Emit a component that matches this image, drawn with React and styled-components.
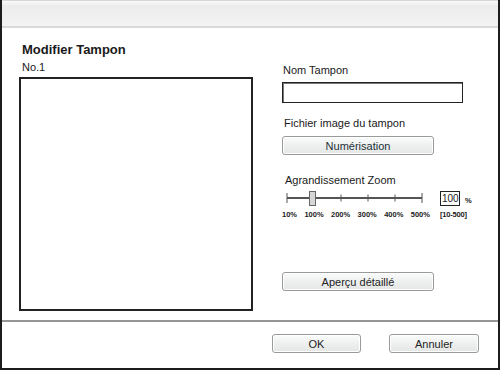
import React from "react";
import styled, { createGlobalStyle } from "styled-components";

const GlobalStyle = createGlobalStyle`
	body {
		margin: 0;
		background: #fff;
		font-family: "Liberation Sans", Arial, sans-serif;
	}
`;

const Frame = styled.div`
	width: 500px;
	height: 370px;
	box-sizing: border-box;
	border: 2px solid #1c1c1c;
	border-top: none;
	display: flex;
	flex-direction: column;
	background: #fff;
	color: #1a1a1a;
`;

const TitleBar = styled.div`
	flex: 0 0 auto;
	height: 28px;
	box-sizing: border-box;
	border-top: 1px solid #d6d6d6;
	border-bottom: 2px solid #dadada;
	background: linear-gradient(to bottom, #fafafa 0%, #ececec 20%, #f3f3f3 100%);
`;

const Body = styled.div`
	flex: 1;
	display: flex;
	padding: 14px 0 0 17px;
`;

const LeftCol = styled.div`
	display: flex;
	flex-direction: column;
	width: 234px;
`;

const Title = styled.div`
	font-size: 13px;
	font-weight: bold;
	line-height: 16px;
	padding-left: 3px;
`;

const Sub = styled.div`
	font-size: 11px;
	line-height: 14px;
	margin-top: 2px;
	padding-left: 3px;
`;

const Preview = styled.div`
	margin-top: 3px;
	width: 234px;
	height: 234px;
	box-sizing: border-box;
	border: 2px solid #222;
	background: #fff;
`;

const RightCol = styled.div`
	display: flex;
	flex-direction: column;
	margin-left: 29px;
	margin-top: 21px;
	width: 200px;
`;

const Label = styled.div`
	font-size: 11px;
	line-height: 14px;
	margin-top: ${(p) => p.$top || 0}px;
	padding-left: ${(p) => p.$indent || 1}px;
`;

const TextInput = styled.div`
	margin-top: 5px;
	width: 181px;
	height: 21px;
	box-sizing: border-box;
	border: 1px solid #222;
	box-shadow: inset 1px 1px 0 #777;
	background: #fff;
`;

const Button = styled.div`
	width: ${(p) => p.$w || 152}px;
	height: 19px;
	box-sizing: border-box;
	margin-top: ${(p) => p.$top || 0}px;
	border: 1px solid #9a9a9a;
	border-radius: 3px;
	background: linear-gradient(to bottom, #fafbfb 0%, #eef0f0 50%, #e4e6e6 100%);
	box-shadow: inset 0 0 0 1px #fff;
	display: flex;
	align-items: center;
	justify-content: center;
	font-size: 11px;
	color: ${(p) => p.$color || "#222"};
`;

const SliderBlock = styled.div`
	display: flex;
	margin-top: 3px;
`;

const SliderCol = styled.div`
	display: flex;
	flex-direction: column;
	width: 158px;
`;

const Ticks = styled.div`
	display: flex;
	gap: 7.4px;
	margin-top: 4px;
	font-size: 7.5px;
	font-weight: bold;
	line-height: 10px;
	color: #222;
`;

const ValueCol = styled.div`
	display: flex;
	flex-direction: column;
	padding-top: 1px;
`;

const ValueRow = styled.div`
	display: flex;
	align-items: flex-end;
	gap: 5px;
`;

const ValueBox = styled.div`
	width: 20px;
	height: 15px;
	box-sizing: border-box;
	border: 1px solid #222;
	font-size: 10px;
	line-height: 13px;
	padding-left: 1px;
	background: #fff;
	overflow: hidden;
`;

const Unit = styled.span`
	font-size: 7.5px;
	font-weight: bold;
	line-height: 10px;
`;

const Range = styled.div`
	font-size: 7.5px;
	font-weight: bold;
	line-height: 10px;
	margin-top: 4px;
	letter-spacing: -0.2px;
`;

const Separator = styled.div`
	height: 2px;
	background: #959595;
	flex: 0 0 auto;
`;

const Footer = styled.div`
	height: 46px;
	flex: 0 0 auto;
	display: flex;
	justify-content: flex-end;
	align-items: flex-start;
	gap: 28px;
	padding: 12px 19px 0 0;
	box-sizing: border-box;
`;

const ticks = [31, 59, 86, 113];

function ZoomSlider() {
	return (
		<svg width="150" height="16" viewBox="0 0 150 16">
			<line x1="5" y1="8" x2="140" y2="8" stroke="#555" strokeWidth="2" />
			<line x1="5" y1="3" x2="5" y2="13" stroke="#555" strokeWidth="1" />
			<line x1="140" y1="3" x2="140" y2="13" stroke="#555" strokeWidth="1" />
			{ticks.map((x) => (
				<line key={x} x1={x} y1="4.5" x2={x} y2="11.5" stroke="#555" strokeWidth="1" />
			))}
			<rect x="27.5" y="1.5" width="6" height="14" fill="#d6d6d6" stroke="#666" />
		</svg>
	);
}

export default function App() {
	return (
		<>
			<GlobalStyle />
			<Frame>
				<TitleBar />
				<Body>
					<LeftCol>
						<Title>Modifier Tampon</Title>
						<Sub>No.1</Sub>
						<Preview />
					</LeftCol>
					<RightCol>
						<Label>Nom Tampon</Label>
						<TextInput />
						<Label $top={13} $indent={2}>Fichier image du tampon</Label>
						<Button $top={6} $color="#1d3038">Numérisation</Button>
						<Label $top={18} $indent={3}>Agrandissement Zoom</Label>
						<SliderBlock>
							<SliderCol>
								<ZoomSlider />
								<Ticks>
									<span>10%</span>
									<span>100%</span>
									<span>200%</span>
									<span>300%</span>
									<span>400%</span>
									<span>500%</span>
								</Ticks>
							</SliderCol>
							<ValueCol>
								<ValueRow>
									<ValueBox>100</ValueBox>
									<Unit>%</Unit>
								</ValueRow>
								<Range>[10-500]</Range>
							</ValueCol>
						</SliderBlock>
						<Button $top={52}>Aperçu détaillé</Button>
					</RightCol>
				</Body>
				<Separator />
				<Footer>
					<Button $w={89}>OK</Button>
					<Button $w={90}>Annuler</Button>
				</Footer>
			</Frame>
		</>
	);
}
